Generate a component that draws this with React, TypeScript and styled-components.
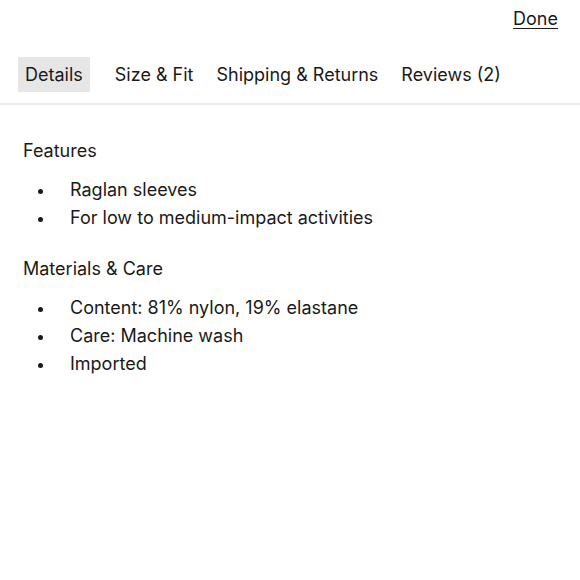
import React, { FC } from 'react';
import styled, { createGlobalStyle } from 'styled-components';

const GlobalStyle = createGlobalStyle`
  body {
    margin: 0;
    background: #ffffff;
    font-family: Inter, "Liberation Sans", sans-serif;
    color: #1a1a1a;
  }
`;

const Page = styled.div`
  width: 580px;
  height: 580px;
  display: flex;
  flex-direction: column;
`;

const TopBar = styled.div`
  display: flex;
  justify-content: flex-end;
  padding: 8px 22px 0 0;
  height: 50px;
  box-sizing: border-box;
`;

const DoneLink = styled.a`
  font-size: 18px;
  line-height: 22px;
  color: #1a1a1a;
  text-decoration: underline;
  text-underline-offset: 3px;
  cursor: pointer;
`;

const TabBar = styled.div`
  display: flex;
  align-items: center;
  gap: 9px;
  padding: 7px 18px 11px;
  border-bottom: 2px solid #ebebeb;
`;

const Tab = styled.button<{ $active?: boolean }>`
  border: none;
  margin: 0 ${(p) => (p.$active ? '9px' : '0')} 0 0;
  padding: 0 7px;
  height: 35px;
  font-family: inherit;
  font-size: 18px;
  color: #1a1a1a;
  background: ${(p) => (p.$active ? '#e6e6e6' : 'transparent')};
  cursor: pointer;
`;

const Content = styled.div`
  padding: 32px 23px 0;
`;

const SectionTitle = styled.h3`
  margin: 0;
  font-size: 18px;
  font-weight: 400;
  line-height: 28px;
`;

const List = styled.ul`
  list-style: none;
  margin: 11px 0 23px;
  padding: 0;
`;

const Item = styled.li`
  display: flex;
  align-items: center;
  font-size: 18px;
  line-height: 28px;

  &::before {
    content: '';
    width: 5px;
    height: 5px;
    border-radius: 50%;
    background: #1a1a1a;
    margin: 3px 27px 0 15px;
    flex-shrink: 0;
  }
`;

const sections = [
  { title: 'Features', items: ['Raglan sleeves', 'For low to medium-impact activities'] },
  {
    title: 'Materials & Care',
    items: ['Content: 81% nylon, 19% elastane', 'Care: Machine wash', 'Imported'],
  },
];

const tabs = ['Details', 'Size & Fit', 'Shipping & Returns', 'Reviews (2)'];

const App: FC = () => (
  <Page>
    <GlobalStyle />
    <TopBar>
      <DoneLink>Done</DoneLink>
    </TopBar>
    <TabBar>
      {tabs.map((t, i) => (
        <Tab key={t} $active={i === 0}>
          {t}
        </Tab>
      ))}
    </TabBar>
    <Content>
      {sections.map((s) => (
        <div key={s.title}>
          <SectionTitle>{s.title}</SectionTitle>
          <List>
            {s.items.map((it) => (
              <Item key={it}>{it}</Item>
            ))}
          </List>
        </div>
      ))}
    </Content>
  </Page>
);

export default App;
